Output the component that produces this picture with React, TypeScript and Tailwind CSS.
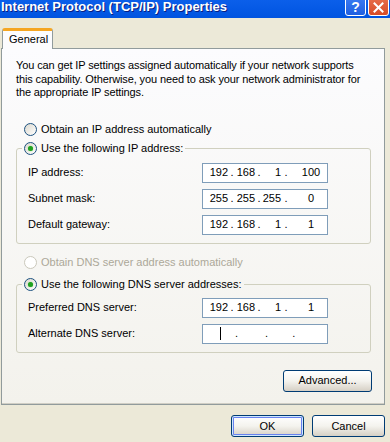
import React from 'react';

type RadioProps = { checked?: boolean; disabled?: boolean };

function Radio({ checked, disabled }: RadioProps) {
  return (
    <span
      className={
        disabled
          ? 'flex h-[13px] w-[13px] shrink-0 items-center justify-center rounded-full border border-[#CAC8BB] bg-white'
          : 'flex h-[13px] w-[13px] shrink-0 items-center justify-center rounded-full border border-[#1C5180] bg-gradient-to-br from-[#DCD9CF] to-white'
      }
    >
      {checked && <span className="h-[5px] w-[5px] rounded-full bg-[#21A121] shadow-[0_0_1px_#5BD35B]" />}
    </span>
  );
}

function RadioRow({ label, checked, disabled }: { label: string } & RadioProps) {
  return (
    <div className={disabled ? 'flex h-[13px] items-center gap-[4px] text-[#ACA899]' : 'flex h-[13px] items-center gap-[4px]'}>
      <Radio checked={checked} disabled={disabled} />
      <span className="leading-[13px]">{label}</span>
    </div>
  );
}

// one IP field box; last field sits a bit to the left of the right edge
function IpBox({ parts }: { parts: string[] }) {
  return (
    <div className="flex h-[20px] w-[126px] items-center border border-[#7F9DB9] bg-white leading-[13px]">
      <span className="w-[26px] pr-[1px] text-right">{parts[0]}</span>
      <span className="w-[5px] pl-px text-center">.</span>
      <span className="w-[22px] pr-[1px] text-right">{parts[1]}</span>
      <span className="w-[5px] pl-px text-center">.</span>
      <span className="w-[22px] pr-[2px] text-right">{parts[2]}</span>
      <span className="w-[5px] pl-px text-center">.</span>
      <span className="flex-1 pl-[7px] text-center">{parts[3]}</span>
    </div>
  );
}

function EmptyIpBox() {
  return (
    <div className="flex h-[20px] w-[126px] items-center border border-[#7F9DB9] bg-white leading-[13px]">
      <span className="ml-[17px] h-[13px] w-px bg-black" />
      <span className="ml-[14px]">.</span>
      <span className="ml-[27px]">.</span>
      <span className="ml-[24px]">.</span>
    </div>
  );
}

function FieldRow({ label, children }: { label: string; children: React.ReactNode }) {
  return (
    <div className="flex h-[26px] items-center">
      <span className="w-[174px] leading-[13px]">{label}</span>
      {children}
    </div>
  );
}

function XpButton({ label, isDefault, width }: { label: string; isDefault?: boolean; width: string }) {
  return (
    <button
      className={
        'h-[22px] rounded-[3px] border border-[#003C74] bg-gradient-to-b from-white via-[#F4F3EE] to-[#D6D0C5] text-[11px] leading-[13px] text-black ' +
        width +
        (isDefault ? ' shadow-[inset_0_0_0_1px_#CEE7FF,inset_0_0_0_2px_#6982EE]' : '')
      }
    >
      {label}
    </button>
  );
}

export default function App() {
  return (
    <div className="flex h-[442px] w-[390px] flex-col overflow-hidden bg-[#ECE9D8] font-['Liberation_Sans',sans-serif] text-[11px] text-black">
      {/* title bar, top part cut off */}
      <div className="flex h-[18px] shrink-0 items-start overflow-hidden bg-gradient-to-b from-[#0B5FEA] to-[#0154E0] pl-[1px] pr-[1px]">
        <span className="-mt-[1px] flex-1 whitespace-nowrap text-[13px] font-bold leading-[16px] text-white [text-shadow:1px_1px_0_#0A1E80]">
          Internet Protocol (TCP/IP) Properties
        </span>
        <div className="-mt-[4px] flex gap-[2px]">
          <div className="flex h-[20px] w-[21px] items-end justify-center rounded-[3px] border border-white bg-gradient-to-b from-[#3C7CF4] to-[#1F5FE0] pb-px text-[14px] font-bold leading-[14px] text-white">
            ?
          </div>
          <div className="flex h-[20px] w-[21px] items-end justify-center rounded-[3px] border border-white bg-gradient-to-b from-[#E8704E] to-[#D84B25] pb-[2px]">
            <svg width="11" height="11" viewBox="0 0 11 11">
              <path d="M1.5 1.5 L9.5 9.5 M9.5 1.5 L1.5 9.5" stroke="white" strokeWidth="2" strokeLinecap="square" />
            </svg>
          </div>
        </div>
      </div>

      <div className="pl-[1px] pr-[5px] pt-[10px]">
        {/* tab strip */}
        <div className="relative z-10 flex pl-[1px]">
          <div className="-mb-px h-[21px] w-[51px] rounded-t-[3px] border-x border-t-[3px] border-x-[#919B9C] border-t-[#F5A623] bg-[#FCFCFE] pl-[6px] pt-[2px] leading-[13px]">
            General
          </div>
        </div>

        {/* tab page */}
        <div className="flex h-[357px] flex-col border border-[#919B9C] bg-gradient-to-b from-[#FCFCFE] to-[#F3F2EC] shadow-[inset_0_-1px_0_#D0CEC4]">
          <p className="pl-[14px] pr-[10px] pt-[10px] leading-[13.5px] tracking-[-0.12px]">
            You can get IP settings assigned automatically if your network supports
            <br />
            this capability. Otherwise, you need to ask your network administrator for
            <br />
            the appropriate IP settings.
          </p>

          <div className="mt-[23px] pl-[22px]">
            <RadioRow label="Obtain an IP address automatically" />
          </div>

          <fieldset className="ml-[14px] mt-[6px] w-[355px] rounded-[3px] border border-[#D0D0BF] px-[11px] pb-[5px] pt-[5px]">
            <legend className="-ml-[6px] px-[2px]">
              <RadioRow label="Use the following IP address:" checked />
            </legend>
            <FieldRow label="IP address:">
              <IpBox parts={['192', '168', '1', '100']} />
            </FieldRow>
            <FieldRow label="Subnet mask:">
              <IpBox parts={['255', '255', '255', '0']} />
            </FieldRow>
            <FieldRow label="Default gateway:">
              <IpBox parts={['192', '168', '1', '1']} />
            </FieldRow>
          </fieldset>

          <div className="mt-[12px] pl-[22px]">
            <RadioRow label="Obtain DNS server address automatically" disabled />
          </div>

          <fieldset className="ml-[14px] mt-[9px] w-[355px] rounded-[3px] border border-[#D0D0BF] px-[11px] pb-[5px] pt-[4px]">
            <legend className="-ml-[6px] px-[2px]">
              <RadioRow label="Use the following DNS server addresses:" checked />
            </legend>
            <FieldRow label="Preferred DNS server:">
              <IpBox parts={['192', '168', '1', '1']} />
            </FieldRow>
            <FieldRow label="Alternate DNS server:">
              <EmptyIpBox />
            </FieldRow>
          </fieldset>

          <div className="mt-[17px] flex justify-end pr-[12px]">
            <XpButton label="Advanced..." width="w-[89px]" />
          </div>
        </div>
      </div>

      <div className="mt-[10px] flex justify-end gap-[8px] pr-[5px]">
        <XpButton label="OK" isDefault width="w-[73px]" />
        <XpButton label="Cancel" width="w-[73px]" />
      </div>
    </div>
  );
}
